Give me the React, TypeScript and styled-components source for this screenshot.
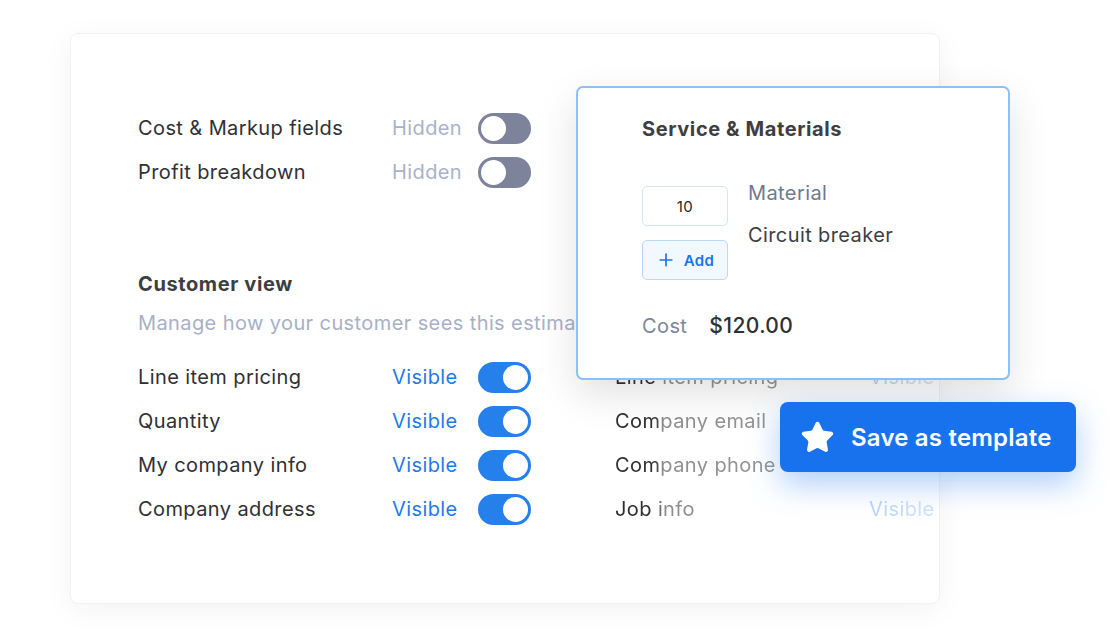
import React from 'react'
import styled, { createGlobalStyle } from 'styled-components'
import { Star, Plus } from 'lucide-react'

const GlobalStyle = createGlobalStyle`
  body {
    margin: 0;
    background: #fff;
    font-family: Inter, "Noto Sans", "Liberation Sans", sans-serif;
    letter-spacing: 0.4px;
    -webkit-font-smoothing: antialiased;
  }
`

const internalRows = [
  { label: 'Cost & Markup fields' },
  { label: 'Profit breakdown' },
]

const customerLeft = ['Line item pricing', 'Quantity', 'My company info', 'Company address']
const customerRight = ['Line item pricing', 'Company email', 'Company phone', 'Job info']

const App: React.FC = () => {
  return (
    <>
      <GlobalStyle />
      <StyledStage>
        <StyledCard>
          <StyledList>
            {internalRows.map((row) => (
              <StyledRow key={row.label}>
                <StyledLabel>{row.label}</StyledLabel>
                <StyledStatus on={false}>Hidden</StyledStatus>
                <StyledToggle on={false}>
                  <StyledKnob />
                </StyledToggle>
              </StyledRow>
            ))}
          </StyledList>

          <StyledSection>
            <StyledHeading>Customer view</StyledHeading>
            <StyledSubtitle>Manage how your customer sees this estimate</StyledSubtitle>
            <StyledColumns>
              <StyledList>
                {customerLeft.map((label) => (
                  <StyledRow key={label}>
                    <StyledLabel>{label}</StyledLabel>
                    <StyledStatus on>Visible</StyledStatus>
                    <StyledToggle on>
                      <StyledKnob />
                    </StyledToggle>
                  </StyledRow>
                ))}
              </StyledList>
              {/* right column fades out towards the card edge */}
              <StyledFadedList>
                {customerRight.map((label) => (
                  <StyledRow key={label}>
                    <StyledLabel>{label}</StyledLabel>
                    <StyledStatus on>Visible</StyledStatus>
                    <StyledToggle on>
                      <StyledKnob />
                    </StyledToggle>
                  </StyledRow>
                ))}
              </StyledFadedList>
            </StyledColumns>
          </StyledSection>
        </StyledCard>

        <StyledPopup>
          <StyledPopupTitle>Service &amp; Materials</StyledPopupTitle>
          <StyledItem>
            <StyledItemControls>
              <StyledQty>10</StyledQty>
              <StyledAdd>
                <Plus size={20} strokeWidth={2} />
                Add
              </StyledAdd>
            </StyledItemControls>
            <StyledItemText>
              <StyledItemType>Material</StyledItemType>
              <StyledItemName>Circuit breaker</StyledItemName>
            </StyledItemText>
          </StyledItem>
          <StyledCost>
            <StyledCostLabel>Cost</StyledCostLabel>
            <StyledCostValue>$120.00</StyledCostValue>
          </StyledCost>
        </StyledPopup>

        <StyledSaveButton>
          <Star size={35} fill="#fff" strokeWidth={1.6} strokeLinejoin="round" />
          Save as template
        </StyledSaveButton>
      </StyledStage>
    </>
  )
}

const StyledStage = styled.div`
  position: relative;
  width: 1110px;
  height: 636px;
  overflow: hidden;
`

const StyledCard = styled.div`
  margin: 33px 0 0 70px;
  width: 870px;
  height: 571px;
  box-sizing: border-box;
  padding: 72px 0 0 67px;
  background: #fff;
  border: 1px solid #f1f1f3;
  border-radius: 8px;
  box-shadow: 0 6px 30px rgba(0, 0, 0, 0.05);
  overflow: hidden;
`

const StyledList = styled.div`
  display: flex;
  flex-direction: column;
`

const StyledFadedList = styled(StyledList)`
  -webkit-mask-image: linear-gradient(to right, #000 40px, rgba(0, 0, 0, 0.55) 48px, rgba(0, 0, 0, 0.5) 180px, rgba(0, 0, 0, 0.22) 300px);
  mask-image: linear-gradient(to right, #000 40px, rgba(0, 0, 0, 0.55) 48px, rgba(0, 0, 0, 0.5) 180px, rgba(0, 0, 0, 0.22) 300px);
`

const StyledRow = styled.div`
  display: grid;
  grid-template-columns: 254px 86px 53px;
  align-items: center;
  height: 44px;
`

const StyledLabel = styled.div`
  font-size: 20px;
  color: #2f3033;
  white-space: nowrap;
`

const StyledStatus = styled.div<{ on: boolean }>`
  font-size: 20px;
  color: ${(p) => (p.on ? '#1f7ae9' : '#aab2c8')};
`

const StyledToggle = styled.div<{ on: boolean }>`
  display: flex;
  align-items: center;
  justify-content: ${(p) => (p.on ? 'flex-end' : 'flex-start')};
  width: 53px;
  height: 31px;
  box-sizing: border-box;
  padding: 3px;
  border-radius: 16px;
  background: ${(p) => (p.on ? '#2580ec' : '#7c839a')};
`

const StyledKnob = styled.div`
  width: 25px;
  height: 25px;
  border-radius: 50%;
  background: #fff;
`

const StyledSection = styled.div`
  margin-top: 76px;
`

const StyledHeading = styled.div`
  font-size: 20px;
  line-height: 28px;
  font-weight: 700;
  letter-spacing: 0.6px;
  color: #3d3e42;
`

const StyledSubtitle = styled.div`
  margin: 11px 0 18px;
  font-size: 20px;
  line-height: 28px;
  color: #a8b0c6;
  white-space: nowrap;
`

const StyledColumns = styled.div`
  display: grid;
  grid-template-columns: 477px 400px;
`

const StyledPopup = styled.div`
  position: absolute;
  left: 576px;
  top: 86px;
  width: 434px;
  height: 294px;
  box-sizing: border-box;
  padding: 27px 0 0 64px;
  background: #fff;
  border: 2px solid #8dc0f7;
  border-radius: 7px;
  box-shadow: 0 14px 40px rgba(0, 0, 0, 0.12);
`

const StyledPopupTitle = styled.div`
  font-size: 20px;
  line-height: 28px;
  font-weight: 700;
  letter-spacing: 0.6px;
  color: #3d3e42;
`

const StyledItem = styled.div`
  display: flex;
  gap: 20px;
  margin-top: 36px;
`

const StyledItemControls = styled.div`
  display: flex;
  flex-direction: column;
  gap: 14px;
  margin-top: 7px;
`

const StyledQty = styled.div`
  display: flex;
  align-items: center;
  justify-content: center;
  width: 86px;
  height: 40px;
  box-sizing: border-box;
  border: 1px solid #d5e6fa;
  border-radius: 5px;
  font-size: 15px;
  color: #25262a;
`

const StyledAdd = styled.div`
  display: flex;
  align-items: center;
  justify-content: center;
  gap: 8px;
  width: 86px;
  height: 40px;
  box-sizing: border-box;
  border: 1px solid #b9d8fb;
  border-radius: 5px;
  background: #f2f8ff;
  font-size: 15px;
  font-weight: 600;
  color: #1a73e8;
`

const StyledItemText = styled.div`
  display: flex;
  flex-direction: column;
  gap: 14px;
`

const StyledItemType = styled.div`
  font-size: 20px;
  line-height: 28px;
  color: #6d7a90;
`

const StyledItemName = styled.div`
  font-size: 20px;
  line-height: 28px;
  color: #3d3e42;
`

const StyledCost = styled.div`
  display: flex;
  align-items: center;
  gap: 22px;
  margin-top: 32px;
  font-size: 20px;
  line-height: 28px;
`

const StyledCostLabel = styled.div`
  color: #7b8699;
`

const StyledCostValue = styled.div`
  font-size: 21px;
  font-weight: 500;
  color: #2f3033;
`

const StyledSaveButton = styled.div`
  position: absolute;
  left: 780px;
  top: 402px;
  width: 296px;
  height: 70px;
  box-sizing: border-box;
  display: flex;
  align-items: center;
  gap: 16px;
  padding-left: 20px;
  border-radius: 8px;
  background: #1872ee;
  color: #fff;
  font-size: 24px;
  font-weight: 600;
  letter-spacing: 0.2px;
  box-shadow: 0 12px 32px rgba(24, 114, 238, 0.35);
`

export default App
